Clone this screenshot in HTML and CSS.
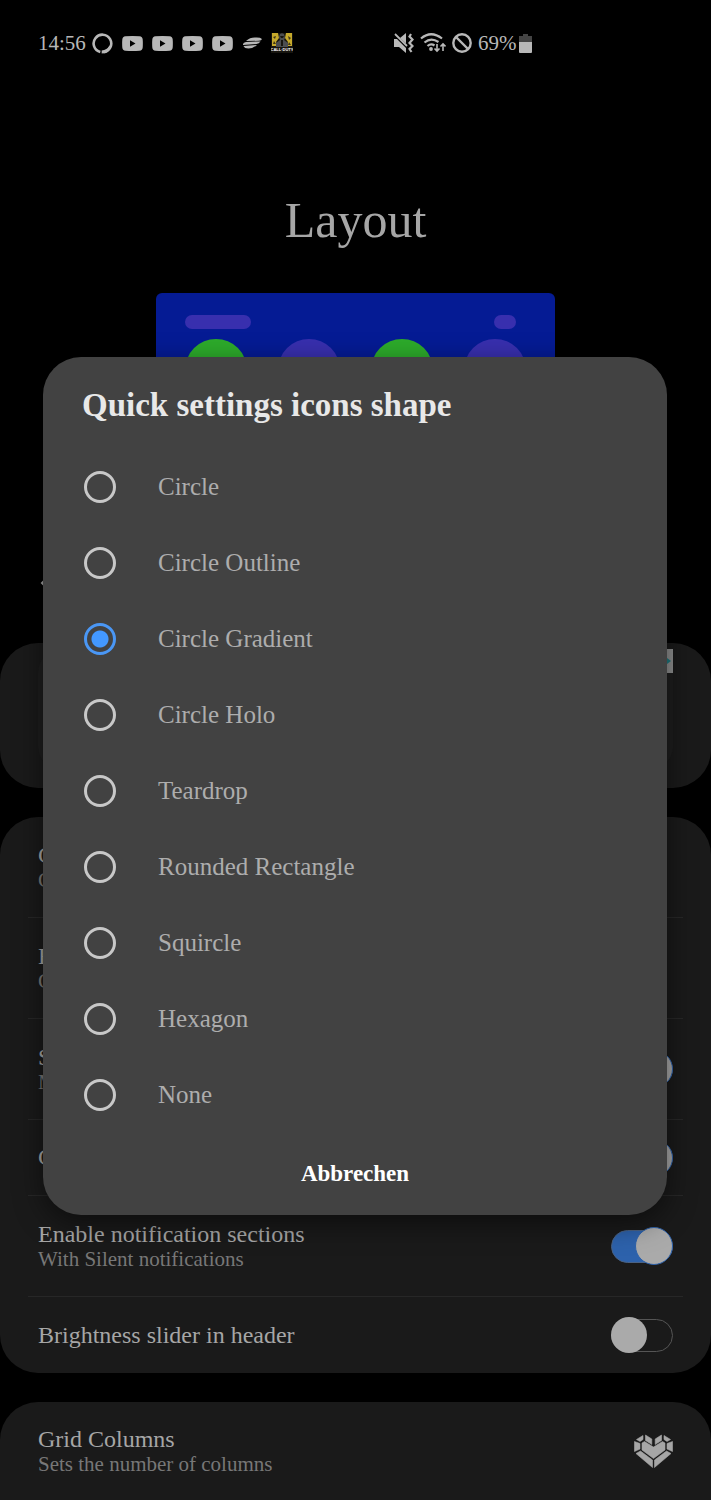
FILE: index.html
```html
<!DOCTYPE html>
<html lang="en">
<head>
    <meta charset="UTF-8">
    <meta name="viewport" content="width=device-width, initial-scale=1.0">
    <title>Layout</title>
    <link rel="stylesheet" href="styles.css">
</head>
<body>
    <svg width="0" height="0" class="sprite" aria-hidden="true">
        <symbol id="play" viewBox="0 0 21 15">
            <path fill="currentColor" fill-rule="evenodd" d="M3.500 .3Q10.500 -.3 17.500 .3Q20.500 .5 20.700 3.500Q21 7.500 20.700 11.500Q20.500 14.500 17.500 14.700Q10.500 15.300 3.500 14.700Q.5 14.500 .3 11.500Q0 7.500 .3 3.500Q.5 .5 3.500 .3ZM8 4.300V10.700L13.500 7.500Z"/>
        </symbol>
    </svg>

    <div class="screen">
        <div class="status-bar">
            <span class="clock">14:56</span>
            <svg width="21" height="21" viewBox="0 0 21 21"><path d="M8.300 19A8.800 8.800 0 1 1 11.500 19.200" fill="none" stroke="currentColor" stroke-width="2.600"/><path fill="currentColor" d="M9.700 20.500V17.500Q15 17 17.500 12.500L19.500 13.500Q17 20 9.700 20.500Z"/></svg>
            <svg width="21" height="15"><use href="#play"/></svg>
            <svg width="21" height="15"><use href="#play"/></svg>
            <svg width="21" height="15"><use href="#play"/></svg>
            <svg width="21" height="15"><use href="#play"/></svg>
            <svg width="20" height="12" viewBox="0 0 20 12">
                <path fill="currentColor" d="M4 4Q8 .5 13 .6Q18 .2 20 2Q19.500 3.500 17 3.800ZM1 7Q1.500 5.200 4 4.900L18.500 4.400Q17 6.600 14.500 7L1 8ZM1.500 9L15 7.900Q11 11.500 6.500 11.500Q2.500 11.500 1.500 9Z"/>
            </svg>
            <svg width="22" height="20" viewBox="0 0 22 20">
                <rect width="22" height="20" fill="#17150f"/>
                <path fill="#c5a92b" d="M1 0H7L8 5L5 9L7 13H1ZM15 0H21V13H15L17 9L14 5Z"/>
                <path fill="#3d3416" d="M2 4L5 3L4 6ZM3 8L5 11H2ZM17 3L20 5L18 7ZM18 9L20 12H17Z"/>
                <path fill="#4b4d50" d="M9 1Q11 -.5 13 1L14 5L13 7L17 10V14H5V10L9 7L8 4Z"/>
                <path fill="#17150f" d="M9 3H13L12 5H10ZM10 7H12V13H10Z"/>
                <text x="11" y="18" class="game-label" text-anchor="middle">CALL·DUTY</text>
            </svg>
            <div class="status-right">
                <svg width="20" height="20" viewBox="0 0 20 20">
                    <path fill="currentColor" d="M0 6H3L12 15V20L5 14H0ZM6 5L12 0V10.500Z"/>
                    <path d="M1 1L13 13" stroke="currentColor" stroke-width="1.800"/>
                    <path d="M17 1L15.500 3.500L18.500 6.500L15.500 10L18.500 13L15.500 16L17.500 19" fill="none" stroke="currentColor" stroke-width="2.200"/>
                </svg>
                <svg width="26" height="20" viewBox="0 0 26 20">
                    <path d="M1 5.500Q11 -3 22 5.500M4.500 9.500Q11 4 18.500 9M7.500 13Q11 10 14.500 12.500" fill="none" stroke="currentColor" stroke-width="2.200"/>
                    <circle cx="11" cy="16" r="1.900" fill="currentColor"/>
                    <path d="M17 11V18M14.500 15.500L17 18L19.500 15.500M23 18V11M20.500 13.500L23 11L25.500 13.500" fill="none" stroke="currentColor" stroke-width="1.600"/>
                </svg>
                <svg width="20" height="20" viewBox="0 0 20 20">
                    <path d="M3.500 3.500L16.500 16.500" stroke="currentColor" stroke-width="2.400"/>
                    <circle cx="10" cy="10" r="8.700" fill="none" stroke="currentColor" stroke-width="2.400"/>
                </svg>
                <span class="battery">69%
                    <svg width="13" height="19" viewBox="0 0 13 19"><path fill="#444" d="M4 0H9V2H13V8H0V2H4Z"/><path fill="currentColor" d="M0 8H13V18Q13 19 12 19H1Q0 19 0 18Z"/></svg>
                </span>
            </div>
        </div>

        <h1>Layout</h1>

        <div class="preview">
            <div class="preview-top">
                <span class="pill pill-long"></span>
                <span class="pill"></span>
            </div>
            <div class="preview-dots">
                <span class="dot on"></span>
                <span class="dot"></span>
                <span class="dot on"></span>
                <span class="dot"></span>
            </div>
        </div>

        <div class="toolbar">
            <button class="back" aria-label="Back">
                <svg width="12" height="20" viewBox="0 0 12 20"><path d="M11 1L2 10L11 19" fill="none" stroke="currentColor" stroke-width="2"/></svg>
            </button>
        </div>

        <div class="card ad-card">
            <div class="ad">
                <span class="ad-badge"><svg width="24" height="24" viewBox="0 0 24 24"><path fill="#1f7a80" d="M6 4L18 9L22 12L18 15L6 20Z"/></svg></span>
            </div>
        </div>

        <div class="card">
            <div class="row">
                <div class="row-text"><span class="name">C</span><span class="desc">C</span></div>
            </div>
            <div class="row">
                <div class="row-text"><span class="name">E</span><span class="desc">C</span></div>
            </div>
            <div class="row">
                <label class="row-text" for="s1"><span class="name">S</span><span class="desc">M</span></label>
                <input type="checkbox" class="switch" id="s1" checked>
            </div>
            <div class="row short">
                <label class="row-text" for="s2"><span class="name">C</span></label>
                <input type="checkbox" class="switch" id="s2" checked>
            </div>
            <div class="row">
                <label class="row-text" for="s3"><span class="name">Enable notification sections</span><span class="desc">With Silent notifications</span></label>
                <input type="checkbox" class="switch" id="s3" checked>
            </div>
            <div class="row short">
                <label class="row-text" for="s4"><span class="name">Brightness slider in header</span></label>
                <input type="checkbox" class="switch" id="s4">
            </div>
        </div>

        <div class="card card-last">
            <div class="row">
                <div class="row-text"><span class="name">Grid Columns</span><span class="desc">Sets the number of columns</span></div>
                <svg width="39" height="34" viewBox="0 0 39 34" fill="currentColor" stroke="currentColor" stroke-width=".6">
                    <path d="M2.500 5.500L9 1.500V5.500L6 7.500ZM11.500 1L17.800 5V10.500L11.500 6.500ZM27.500 1L21.200 5V10.500L27.500 6.500ZM36.500 5.500L30 1.500V5.500L33 7.500Z"/>
                    <path d="M.5 7.500L6 9.500V15L.5 17.500ZM38.500 7.500L33 9.500V15L38.500 17.500Z"/>
                    <path d="M8 9L10.500 7.500L19.500 13L28.500 7.500L31 9V16L19.500 24.500L8 16Z"/>
                    <path d="M2 19.500L6.500 17L18.500 26V33.500ZM37 19.500L32.500 17L20.500 26V33.500Z"/>
                </svg>
            </div>
        </div>
    </div>

    <div class="overlay">
        <form class="dialog" role="dialog" aria-labelledby="dialog-title">
            <h2 id="dialog-title">Quick settings icons shape</h2>
            <label class="option"><input type="radio" name="shape">Circle</label>
            <label class="option"><input type="radio" name="shape">Circle Outline</label>
            <label class="option"><input type="radio" name="shape" checked>Circle Gradient</label>
            <label class="option"><input type="radio" name="shape">Circle Holo</label>
            <label class="option"><input type="radio" name="shape">Teardrop</label>
            <label class="option"><input type="radio" name="shape">Rounded Rectangle</label>
            <label class="option"><input type="radio" name="shape">Squircle</label>
            <label class="option"><input type="radio" name="shape">Hexagon</label>
            <label class="option"><input type="radio" name="shape">None</label>
            <button type="button" class="cancel">Abbrechen</button>
        </form>
    </div>
</body>
</html>
```
FILE: styles.css
```css
* {
    box-sizing: border-box;
}
body {
    margin: 0;
    background-color: #000;
    color: #a6a6a6;
    font-family: "Liberation Serif", "Times New Roman", serif;
}
button {
    font-family: inherit;
    background: none;
    border: none;
    padding: 0;
    cursor: pointer;
}
svg {
    display: block;
    flex: none;
}
.sprite {
    position: absolute;
}
.screen {
    display: flex;
    flex-direction: column;
    min-height: 100vh;
}

/* status bar */
.status-bar {
    display: flex;
    align-items: center;
    gap: 9px;
    height: 86px;
    padding-left: 38px;
    color: #b8b8b8;
}
.clock,
.battery {
    font-size: 21px;
}
.clock {
    width: 45px;
}
.status-right {
    display: flex;
    align-items: center;
    gap: 6px;
    margin-left: 92px;
}
.battery {
    display: flex;
    align-items: center;
    gap: 2px;
}
.game-label {
    font-family: "Liberation Sans", sans-serif;
    font-size: 4px;
    font-weight: bold;
    fill: #fff;
}

h1 {
    margin: 104px 0 0;
    font-size: 50px;
    line-height: 60px;
    font-weight: normal;
    text-align: center;
}

/* quick settings preview */
.preview {
    width: 56%;
    height: 248px;
    margin: 43px auto 0;
    padding: 22px 29px;
    border-radius: 6px;
    background-color: #051b94;
}
.preview-top,
.preview-dots {
    display: flex;
    justify-content: space-between;
}
.preview-top {
    padding-right: 10px;
    margin-bottom: 10px;
}
.pill {
    width: 22px;
    height: 14px;
    border-radius: 7px;
    background-color: #382fae;
}
.pill-long {
    width: 66px;
}
.dot {
    width: 62px;
    height: 62px;
    border-radius: 50%;
    background-color: #382fae;
}
.dot.on {
    background-color: #2dab2b;
}

.toolbar {
    display: flex;
    align-items: center;
    height: 84px;
    padding: 0 40px;
}
.back {
    color: inherit;
}

/* setting cards */
.card {
    margin-bottom: 29px;
    padding: 0 28px;
    border-radius: 38px;
    background-color: #1a1a1a;
}
.ad-card {
    margin-top: 18px;
    padding: 6px 38px 18px;
}
.ad {
    display: flex;
    justify-content: flex-end;
    height: 121px;
    border-radius: 24px;
    background-color: #1e1e1e;
}
.ad-badge {
    height: 24px;
    background-color: #8f9090;
}
.row {
    display: flex;
    align-items: center;
    justify-content: space-between;
    min-height: 101px;
    padding: 0 10px;
    border-bottom: 1px solid #272727;
}
.row.short {
    min-height: 76px;
}
.row:last-child {
    border-bottom: none;
}
.row-text {
    display: flex;
    flex-direction: column;
}
.name {
    font-size: 24px;
    line-height: 25px;
    color: #a6a6a6;
}
.desc {
    font-size: 21px;
    line-height: 24px;
    color: #777;
}
.card-last {
    flex: 1;
    margin-bottom: 0;
    border-radius: 38px 38px 0 0;
}
.card-last .row {
    min-height: 98px;
}

.switch {
    appearance: none;
    display: flex;
    align-items: center;
    flex: none;
    width: 62px;
    height: 33px;
    margin: 0;
    border: 1px solid #555;
    border-radius: 17px;
}
.switch::before {
    content: "";
    flex: none;
    width: 36px;
    height: 36px;
    margin-left: -1px;
    border-radius: 50%;
    background-color: #aaa;
}
.switch:checked {
    justify-content: flex-end;
    border-color: #4a6284;
    background-color: #2d62ac;
}
.switch:checked::before {
    margin-right: -1px;
    border: 1px solid #2d62ac;
}

/* dialog */
.overlay {
    position: absolute;
    top: 0;
    left: 0;
    right: 0;
    padding: 357px 44px 0 43px;
}
.dialog {
    display: flex;
    flex-direction: column;
    padding: 28px 39px 20px;
    border-radius: 38px;
    background-color: #424242;
    box-shadow: 0 8px 28px rgba(0, 0, 0, 0.5);
}
.dialog h2 {
    margin: 0 0 24px;
    font-size: 33px;
    line-height: 40px;
    color: #e8e8e8;
}
.option {
    display: flex;
    align-items: center;
    gap: 42px;
    height: 76px;
    padding-left: 2px;
    font-size: 25px;
    color: #adadad;
}
.option input {
    appearance: none;
    width: 32px;
    height: 32px;
    margin: 0;
    border: 3px solid #c8c8c8;
    border-radius: 50%;
}
.option input:checked {
    border-color: #4a97f5;
    background: radial-gradient(circle, #4398ff 8px, transparent 9px);
}
.cancel {
    align-self: center;
    height: 42px;
    margin: 20px 0 0;
    padding: 0 20px;
    font-size: 23px;
    font-weight: bold;
    color: #fff;
}
```
